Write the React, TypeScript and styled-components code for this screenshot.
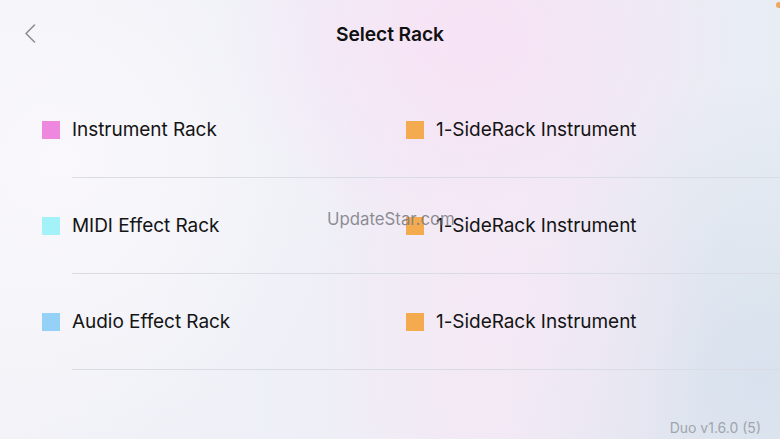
import React from "react";
import styled, { createGlobalStyle } from "styled-components";

const Global = createGlobalStyle`
  html, body { margin: 0; padding: 0; }
  body { font-family: Inter, "Noto Sans", sans-serif; -webkit-font-smoothing: antialiased; }
`;

const Screen = styled.div`
  position: relative;
  width: 780px;
  height: 439px;
  overflow: hidden;
  display: flex;
  flex-direction: column;
  background:
    radial-gradient(ellipse 260px 200px at 470px 40px, rgba(248, 226, 246, 0.9), rgba(248, 226, 246, 0) 100%),
    radial-gradient(ellipse 200px 260px at 520px 300px, rgba(246, 232, 246, 0.7), rgba(246, 232, 246, 0) 100%),
    radial-gradient(ellipse 300px 300px at 60px 160px, rgba(250, 248, 252, 0.95), rgba(250, 248, 252, 0) 100%),
    radial-gradient(ellipse 260px 300px at 760px 380px, rgba(214, 224, 236, 0.9), rgba(214, 224, 236, 0) 100%),
    linear-gradient(90deg, #f2f2f8 0%, #eef0f7 35%, #f1eaf4 60%, #e8edf4 100%);
`;

const Header = styled.header`
  height: 82px;
  display: grid;
  grid-template-columns: 60px 1fr 60px;
  align-items: start;
`;

const BackButton = styled.div`
  padding: 24px 0 0 24px;
  display: flex;
`;

const Title = styled.h1`
  margin: 0;
  padding-top: 22px;
  text-align: center;
  font-size: 19.3px;
  font-weight: 600;
  color: #111;
  letter-spacing: -0.1px;
`;

const List = styled.div`
  display: flex;
  flex-direction: column;
`;

const Row = styled.div`
  height: 95px;
  display: grid;
  grid-template-columns: 364px 1fr;
  padding-left: 42px;
  align-items: center;
`;

const Divider = styled.div`
  height: 1px;
  margin-left: 72px;
  background: #d9dce2;
`;

const Item = styled.div`
  display: flex;
  align-items: center;
  gap: 12px;
`;

const Swatch = styled.span<{ $color: string }>`
  width: 18px;
  height: 18px;
  background: ${(p) => p.$color};
  flex: none;
`;

const Label = styled.span`
  font-size: 19px;
  color: #141414;
  letter-spacing: -0.05px;
`;

const Footer = styled.div`
  margin-top: auto;
  display: flex;
  justify-content: flex-end;
  padding: 0 19px 0 0;
  height: 20px;
`;

const Version = styled.span`
  font-size: 14px;
  color: #a1a5ad;
`;

const Watermark = styled.div`
  position: absolute;
  left: 327px;
  top: 209px;
  font-size: 16.8px;
  color: rgba(120, 122, 130, 0.85);
  pointer-events: none;
`;

const Dot = styled.div`
  position: absolute;
  right: -2px;
  top: 2px;
  width: 6px;
  height: 6px;
  border-radius: 50%;
  background: #f0a860;
`;

const rows = [
  { left: { label: "Instrument Rack", color: "#ee88de" }, right: { label: "1-SideRack Instrument", color: "#f4ab4f" } },
  { left: { label: "MIDI Effect Rack", color: "#a3f2f7" }, right: { label: "1-SideRack Instrument", color: "#f4ab4f" } },
  { left: { label: "Audio Effect Rack", color: "#95d0f7" }, right: { label: "1-SideRack Instrument", color: "#f4ab4f" } },
];

export default function App() {
  return (
    <>
      <Global />
      <Screen>
        <Header>
          <BackButton>
            <svg width="12" height="19" viewBox="0 0 12 19">
              <path d="M10.5 1 L2 9.5 L10.5 18" fill="none" stroke="#8d8e94" strokeWidth="1.6" strokeLinecap="round" strokeLinejoin="round" />
            </svg>
          </BackButton>
          <Title>Select Rack</Title>
          <div />
        </Header>
        <List>
          {rows.map((r, i) => (
            <React.Fragment key={i}>
              <Row>
                <Item>
                  <Swatch $color={r.left.color} />
                  <Label>{r.left.label}</Label>
                </Item>
                <Item>
                  <Swatch $color={r.right.color} />
                  <Label>{r.right.label}</Label>
                </Item>
              </Row>
              <Divider />
            </React.Fragment>
          ))}
        </List>
        <Footer>
          <Version>Duo v1.6.0 (5)</Version>
        </Footer>
        <Watermark>UpdateStar.com</Watermark>
        <Dot />
      </Screen>
    </>
  );
}
